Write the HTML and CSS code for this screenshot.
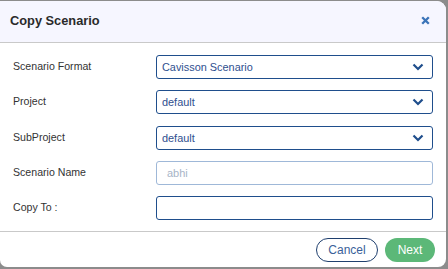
FILE: index.html
```html
<!DOCTYPE html>
<html>
<head>
<meta charset="utf-8">
<link rel="stylesheet" href="styles.css">
</head>
<body>
<div class="dialog">
  <div class="header">
    <span class="title">Copy Scenario</span>
    <svg class="close" width="9" height="9" viewBox="0 0 9 9"><path d="M1.2 1.2 L7.8 7.8 M7.8 1.2 L1.2 7.8" stroke="#3b74b8" stroke-width="2.3" stroke-linecap="butt"/></svg>
  </div>
  <div class="content">
    <label class="lbl">Scenario Format</label>
    <div class="select"><span>Cavisson Scenario</span><svg class="chev" width="12" height="8" viewBox="0 0 12 8"><path d="M1.5 1.5 L6 6 L10.5 1.5" fill="none" stroke="#1f4e8c" stroke-width="2.2"/></svg></div>
    <label class="lbl">Project</label>
    <div class="select"><span>default</span><svg class="chev" width="12" height="8" viewBox="0 0 12 8"><path d="M1.5 1.5 L6 6 L10.5 1.5" fill="none" stroke="#1f4e8c" stroke-width="2.2"/></svg></div>
    <label class="lbl">SubProject</label>
    <div class="select"><span>default</span><svg class="chev" width="12" height="8" viewBox="0 0 12 8"><path d="M1.5 1.5 L6 6 L10.5 1.5" fill="none" stroke="#1f4e8c" stroke-width="2.2"/></svg></div>
    <label class="lbl">Scenario Name</label>
    <div class="input disabled"><span class="ph">abhi</span></div>
    <label class="lbl">Copy To :</label>
    <div class="input"></div>
  </div>
  <div class="footer">
    <button class="btn cancel">Cancel</button>
    <button class="btn next">Next</button>
  </div>
</div>
</body>
</html>
```
FILE: styles.css
```css
html, body {
  margin: 0;
  padding: 0;
  width: 448px;
  height: 269px;
  overflow: hidden;
  background: #8c8c8c;
  font-family: "Liberation Sans", Arial, sans-serif;
}
.dialog {
  margin-top: 1px;
  width: 446px;
  height: 266px;
  background: #fff;
  border-radius: 0 9px 8px 7px;
  overflow: hidden;
  display: flex;
  flex-direction: column;
}
.header {
  height: 42px;
  box-sizing: border-box;
  background: #f6f6ff;
  border-bottom: 1px solid #c9c9c9;
  display: flex;
  align-items: center;
  justify-content: space-between;
  padding: 0 16px 0 10px;
}
.title {
  font-size: 12.8px;
  font-weight: bold;
  color: #2a2a2a;
  margin-top: -2px;
}
.close {
  display: block;
  margin-top: -2px;
}
.content {
  display: grid;
  grid-template-columns: 143px 277px;
  grid-auto-rows: 24px;
  row-gap: 11.25px;
  padding: 12px 0 11px 13px;
  border-bottom: 1px solid #c9c9c9;
}
.lbl {
  font-size: 10.6px;
  color: #333;
  display: flex;
  align-items: center;
  margin-top: -2px;
}
.select, .input {
  box-sizing: border-box;
  border: 1px solid #1f4e8c;
  border-radius: 3px;
  display: flex;
  align-items: center;
  justify-content: space-between;
  padding: 0 8px 0 5px;
  font-size: 10.9px;
  color: #2f4f8f;
}
.chev {
  display: block;
}
.input.disabled {
  border-color: #9fb8d8;
}
.ph {
  color: #a7b4c7;
  font-size: 11px;
  padding-left: 5px;
}
.footer {
  display: flex;
  justify-content: flex-end;
  gap: 7px;
  padding: 6px 11px 0 0;
}
.btn {
  height: 24px;
  border-radius: 12px;
  font-family: "Liberation Sans", Arial, sans-serif;
  font-size: 12px;
  padding: 0;
  box-sizing: border-box;
}
.cancel {
  width: 62px;
  background: #fff;
  border: 1px solid #1f3f6e;
  color: #3a5f9a;
}
.next {
  width: 50px;
  background: #5cb878;
  border: none;
  color: #fff;
}
```
